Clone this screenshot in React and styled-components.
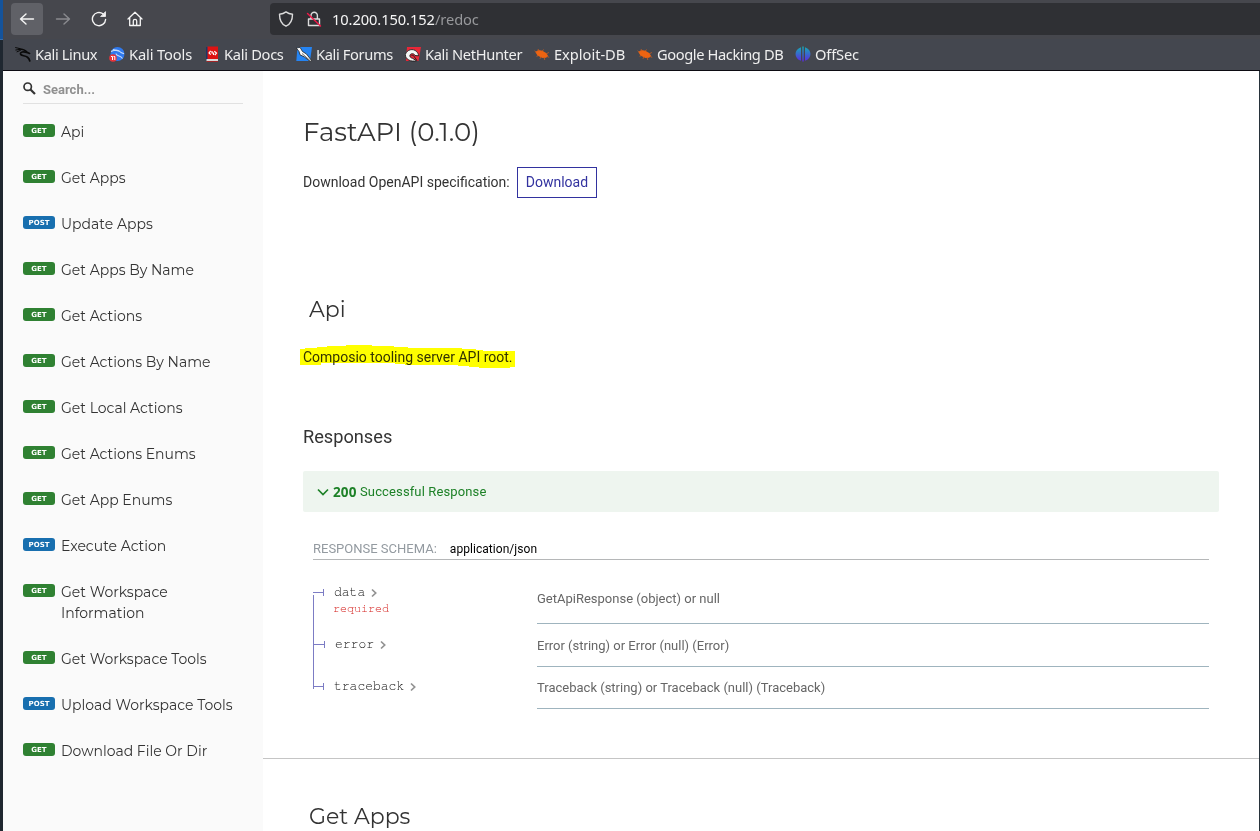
import React from 'react';
import styled, { createGlobalStyle } from 'styled-components';

const GlobalStyle = createGlobalStyle`
  * { box-sizing: border-box; }
  body { margin: 0; background: #fff; overflow: hidden; }
  svg { display: block; flex: none; }
`;

const ui = '"Noto Sans", "Open Sans", sans-serif';
const body = 'Roboto, "Liberation Sans", sans-serif';
const heading = 'Montserrat, Inter, sans-serif';
const mono = '"Nimbus Mono PS", FreeMono, "Courier Prime", "Cutive Mono", "Liberation Mono", monospace';

const Screen = styled.div`
  display: grid;
  grid-template-columns: 3px 1fr;
  width: 1260px;
  height: 831px;
  overflow: hidden;
`;

const DesktopEdge = styled.div`
  background: linear-gradient(#14539b 0 39px, #3a6ea8 39px 40px, #1f2730 40px 100%);
`;

const Window = styled.div`
  display: flex;
  flex-direction: column;
  min-width: 0;
  height: 831px;
`;

const Toolbar = styled.div`
  display: flex;
  height: 39px;
  padding: 3px 0 4px 8px;
  background: #46474d;
`;

const NavButton = styled.div`
  display: flex;
  align-items: center;
  justify-content: center;
  width: 32px;
  height: 32px;
  margin-right: 4px;
  border-radius: 4px;
  background: ${(p) => (p.$active ? '#606167' : 'transparent')};
  color: ${(p) => (p.$dim ? '#8a8b8f' : '#f5f5f5')};
`;

const UrlBar = styled.div`
  display: flex;
  align-items: center;
  gap: 12px;
  flex: 1;
  height: 32px;
  margin-left: 115px;
  padding-left: 8px;
  border-radius: 4px 0 0 4px;
  background: #2f3034;
  color: #dcdcdc;
`;

const Url = styled.div`
  margin-left: -2px;
  font: 14.67px/20px ${ui};
  letter-spacing: -0.08px;
  color: #f5f5f5;
  span { color: #97989b; }
`;

const Bookmarks = styled.div`
  display: flex;
  height: 32px;
  padding: 0 0 1px 12px;
  background: #44474f;
  border-bottom: 1px solid #0c0b12;
`;

const Bookmark = styled.div`
  display: flex;
  align-items: center;
  gap: 4px;
  width: ${(p) => p.$width}px;
  font: 14.67px/20px ${ui};
  letter-spacing: ${(p) => p.$track}px;
  white-space: nowrap;
  color: #efefef;
`;

const Page = styled.div`
  display: grid;
  grid-template-columns: 260px 1fr;
  flex: 1;
  min-height: 0;
  border-right: 1px solid #27323a;
  background: #fff;
`;

const Sidebar = styled.nav`
  background: #fafafa;
  padding: 0 20px;
`;

const Search = styled.div`
  display: flex;
  align-items: center;
  gap: 7px;
  height: 33px;
  padding-top: 4px;
  margin-bottom: 5px;
  border-bottom: 1px solid #e1e1e1;
  font: 700 13px/20px ${body};
  color: #909090;
  span { padding-top: 1px; }
`;

const SearchIcon = styled.svg`
  margin-top: -2px;
`;

const MenuItem = styled.div`
  display: flex;
  padding: 13px 0 12px;
`;

const Badge = styled.span`
  flex: none;
  width: 32px;
  height: 13px;
  margin: 2px 6px 0 0;
  border-radius: 3px;
  background: ${(p) => (p.$post ? '#186faf' : '#2f8132')};
  color: #fff;
  font: 700 7px/14px "DejaVu Sans", sans-serif;
  text-align: center;
`;

const MenuLabel = styled.span`
  font: 400 14px/21px ${heading};
  white-space: pre-line;
  color: #333;
`;

const Main = styled.main`
  min-width: 0;
  height: 760px;
  overflow: hidden;
`;

const Section = styled.section`
  padding: ${(p) => p.$top}px 40px 0;
`;

const Title = styled.h1`
  margin: 0;
  font: 400 26px/42px ${heading};
  color: #333;
`;

const DownloadRow = styled.div`
  display: flex;
  align-items: center;
  gap: 7px;
  height: 31px;
  margin-top: 14px;
  font: 14px/20px ${body};
  color: #333;
  span { padding-bottom: 1px; }
`;

const DownloadButton = styled.a`
  padding: 4px 8px 5px;
  border: 1px solid #32329f;
  color: #32329f;
`;

const OperationTitle = styled.h2`
  margin: 0 0 0 6px;
  font: 400 22px/30px ${heading};
  color: #333;
`;

const Description = styled.p`
  position: relative;
  margin: 22px 0 0;
  font: 14px/20px ${body};
  color: #333;
`;

const Marker = styled.svg`
  position: absolute;
  left: -3px;
  top: -2px;
  mix-blend-mode: multiply;
`;

const ResponsesTitle = styled.h3`
  margin: 58px 0 0;
  font: 400 18.2px/24px ${body};
  color: #333;
`;

const ResponseBar = styled.div`
  display: flex;
  align-items: center;
  height: 41px;
  margin-top: 22px;
  padding-left: 14px;
  border-radius: 2px;
  background: #eef5ef;
  color: #1d8127;
  font: 13px/20px ${body};
  letter-spacing: 0.13px;
  strong { width: 24px; margin: 0 3px 0 4px; font: 700 13.5px/20px ${ui}; }
`;

const SchemaHeader = styled.div`
  display: flex;
  align-items: center;
  gap: 13px;
  height: 22px;
  margin: 26px 10px 0;
  border-bottom: 1px solid #b5b7b8;
  font: 13px/20px ${body};
  color: #939aa0;
`;

const MimeType = styled.span`
  font-size: 12px;
  letter-spacing: 0.05px;
  color: #000;
`;

const Schema = styled.div`
  display: grid;
  grid-template-columns: 21px 203px 1fr;
  grid-template-rows: 64px 43px 42px;
  margin: 0 10px;
`;

const Tree = styled.svg`
  grid-row: 1 / 4;
`;

const FieldName = styled.div`
  grid-column: 2;
  padding: ${(p) => p.$top}px 0 0 ${(p) => p.$left || 0}px;
  font: 13px/16px ${mono};
  color: #111;
`;

const NameLine = styled.div`
  display: flex;
  align-items: center;
  gap: 6px;
`;

const Required = styled.div`
  margin-left: -1px;
  font-size: 11.7px;
  color: #d41f1c;
`;

const FieldType = styled.div`
  grid-column: 3;
  padding-top: ${(p) => p.$top}px;
  border-bottom: 1px solid #9fb4be;
  font: 13px/20px ${body};
  color: #666;
`;

const Divider = styled.hr`
  height: 1px;
  margin: 49px 0 0;
  border: 0;
  background: #c5c5c5;
`;

const Stroke = ({ size = 16, width = 1.4, children, ...rest }) => (
  <svg width={size} height={size} viewBox="0 0 16 16" fill="none" stroke="currentColor"
    strokeWidth={width} strokeLinecap="round" strokeLinejoin="round" {...rest}>{children}</svg>
);

const Chevron = () => (
  <svg width="7" height="10" viewBox="0 0 7 10" fill="none" stroke="#929292" strokeWidth="1.7">
    <path d="M1 1.500 4.700 5 1 8.500" />
  </svg>
);

const KaliIcon = () => (
  <svg width="16" height="16" viewBox="0 0 16 16" fill="none" stroke="#0a0a0a" strokeLinecap="round" strokeLinejoin="round">
    <path d="M.6 1.600 5 2.600M.8 4 5 3.400M2 5.800 5.500 4.300" strokeWidth="1" />
    <path d="M4 3c4 .2 6.500 1.300 8 3.200l2.600 1.300" strokeWidth="1.600" />
    <path d="M12 6.500C8 5 5.200 6.200 5.500 8c.4 2 4.500 1.300 7 3.200 1.500 1.100 2 2.300 2.300 3.800" strokeWidth="1.700" />
  </svg>
);
const ToolsIcon = () => (
  <svg width="16" height="16" viewBox="0 0 16 16">
    <circle cx="8.500" cy="8" r="7" fill="#2f79ee" />
    <path d="M2 5.500c4-2 8-1.500 10 1l3 1.200M4 3.500l7 2M7 7.500c0 3 4 1.500 6.500 5" fill="none" stroke="#c9ddfa" strokeWidth="1.100" />
    <circle cx="4" cy="12" r="3.800" fill="#e8343a" />
    <path d="M2 10.500h1.500v3.500M4.500 10.500h1.300v3.500" fill="none" stroke="#fff" strokeWidth="1" />
  </svg>
);
const DocsIcon = () => (
  <svg width="16" height="16" viewBox="0 0 16 16">
    <path d="M2 1h2v13H2z" fill="#1b3768" /><path d="M3.500.5H14V13H3.500z" fill="#dd1313" />
    <path d="M2.500 13H14v2.200H2.500z" fill="#dadada" /><path d="M2.500 15H14v.8H2.500z" fill="#b11515" />
    <path d="M6.700 4.800 5 7l1.700 1.700M10.300 5.300 12.500 7l-1.700 2.200M8 5v2l1.500 0v2" fill="none" stroke="#fff" strokeWidth="1.200" />
  </svg>
);
const ForumsIcon = () => (
  <svg width="16" height="16" viewBox="0 0 16 16">
    <path d="M1.500 1H16l-2 14H.3z" fill="#2584f3" />
    <path d="M.3 2 4 1.300l2.500 4.200 4 2.500 5 6.500-1.300 1L8.500 11 4 8.800 3 5.500z" fill="#f7f7f7" stroke="#222" strokeWidth=".8" />
    <path d="m6 7.500 8.500 7.500" stroke="#333" strokeWidth=".7" />
  </svg>
);
const HunterIcon = () => (
  <svg width="16" height="16" viewBox="0 0 16 16">
    <path d="M2 1h14l-2.500 14H1z" fill="#e92738" />
    <path d="M.3 8.500C2 3.500 8 2 11.500 5.500c1.300 1.300 2 2.700 2 4.300L10 9.500C9.500 7.500 6 7 5 9c-.6 1.600.8 3 2.500 3.300l4 2.400C6 16.200.3 13.500.3 8.500z" fill="#f5f5f5" stroke="#1c1c1c" strokeWidth=".9" />
    <path d="M6.500 9.500c1.500-.5 2.500.3 3 1.500l2.500 3.500" fill="none" stroke="#1c1c1c" strokeWidth=".9" />
  </svg>
);
const BugIcon = () => (
  <svg width="16" height="16" viewBox="0 0 16 16">
    <path d="M1.500 6.200c1.500-2 4.500-2.500 6.800-1.400L12.200 7l1.800 2.800-1.800 1.900-3.700.3-4.800-2.200z" fill="#ed6412" />
    <path d="m4 5.500.3-2.500M8 5.500l1.500-2M12 8l2.800-1.500M13 10.500l2.200.8M10 11l.8 3M7 10.500l-1 2.300M4.500 9.500l-2 .8M2.500 6.500.6 4.800" stroke="#d05c1b" strokeWidth=".8" />
  </svg>
);
const OffSecIcon = () => (
  <svg width="16" height="16" viewBox="0 0 16 16">
    <defs><linearGradient id="os" gradientUnits="userSpaceOnUse" x1="0" y1="1" x2="0" y2="15"><stop stopColor="#16a9b8" /><stop offset="1" stopColor="#5a2be0" /></linearGradient></defs>
    <path d="M6 1.200v13.600C-1.300 12.500-1.300 3.500 6 1.200zM7.300.5h1.400v15H7.300zM10 1.200c7.300 2.300 7.300 11.300 0 13.600z" fill="url(#os)" />
  </svg>
);

const bookmarks = [
  ['Kali Linux', KaliIcon, 94, -0.38], ['Kali Tools', ToolsIcon, 95, -0.12], ['Kali Docs', DocsIcon, 92, -0.3],
  ['Kali Forums', ForumsIcon, 109, -0.36], ['Kali NetHunter', HunterIcon, 129, -0.34], ['Exploit-DB', BugIcon, 103, -0.03],
  ['Google Hacking DB', BugIcon, 158, -0.4], ['OffSec', OffSecIcon, 70, -0.15],
];

const menu = [
  ['Api'], ['Get Apps'], ['Update Apps', true], ['Get Apps By Name'], ['Get Actions'],
  ['Get Actions By Name'], ['Get Local Actions'], ['Get Actions Enums'], ['Get App Enums'],
  ['Execute Action', true], ['Get Workspace\nInformation'], ['Get Workspace Tools'],
  ['Upload Workspace Tools', true], ['Download File Or Dir'],
];

export default function App() {
  return (
    <Screen>
      <GlobalStyle />
      <DesktopEdge />
      <Window>
        <Toolbar>
          <NavButton $active><Stroke><path d="M14.500 8h-13M7 3 1.500 8 7 13" /></Stroke></NavButton>
          <NavButton $dim><Stroke><path d="M1.500 8h13M9 3 14.500 8 9 13" /></Stroke></NavButton>
          <NavButton>
            <Stroke><path d="M14.600 8.500A6.600 6.600 0 1 1 12 2.800" /><path d="M14.500 1v4.500H10z" fill="currentColor" strokeWidth=".8" /></Stroke>
          </NavButton>
          <NavButton>
            <Stroke width={1.3}><path d="M1 8 8 1.200 15 8M2.700 6.800v7.700h10.600V6.800M6.300 14.300V10c0-1 .6-1.600 1.700-1.600s1.700.6 1.700 1.600v4.300" /></Stroke>
          </NavButton>
          <UrlBar>
            <Stroke><path d="M8 .9c2 1.500 4 2.100 6.500 2.300 0 6-1.500 9.800-6.500 12-5-2.200-6.500-6-6.500-12C4 3 6 2.400 8 .9z" /></Stroke>
            <Stroke>
              <path d="M2.500 8h11v6.500h-11zM5 8V4.500a3.200 3.200 0 0 1 6.400 0V8" /><path d="m1.500 2.500 13 12.500" stroke="#f01848" />
            </Stroke>
            <Url>10.200.150.152<span>/redoc</span></Url>
          </UrlBar>
        </Toolbar>
        <Bookmarks>
          {bookmarks.map(([name, Icon, width, track]) => (
            <Bookmark key={name} $width={width} $track={track}><Icon />{name}</Bookmark>
          ))}
        </Bookmarks>
        <Page>
          <Sidebar>
            <Search>
              <SearchIcon width="13" height="13" viewBox="0 0 13 13" fill="none" stroke="#333">
                <circle cx="4.700" cy="4.700" r="3.700" strokeWidth="1.700" /><path d="m7.500 7.500 4.500 4.500" strokeWidth="2.200" />
              </SearchIcon>
              <span>Search...</span>
            </Search>
            {menu.map(([label, post]) => (
              <MenuItem key={label}>
                <Badge $post={post}>{post ? 'POST' : 'GET'}</Badge>
                <MenuLabel>{label}</MenuLabel>
              </MenuItem>
            ))}
          </Sidebar>
          <Main>
            <Section $top={40}>
              <Title>FastAPI (0.1.0)</Title>
              <DownloadRow>
                <span>Download OpenAPI specification:</span>
                <DownloadButton>Download</DownloadButton>
              </DownloadRow>
            </Section>
            <Section $top={97}>
              <OperationTitle>Api</OperationTitle>
              <Description>
                Composio tooling server API root.
                <Marker width="216" height="24" viewBox="0 0 216 24">
                  <path fill="#ff0" d="M0 4h5V3h12V2h10V1h19V0h26v1h22v1h14v1h54v1h14v1h7v1h32v16h-5v1h-31v-1h-10v-1h-11v-1h-53v-1h-10v-1H21v2H0z" />
                </Marker>
              </Description>
              <ResponsesTitle>Responses</ResponsesTitle>
              <ResponseBar>
                <svg width="12" height="8" viewBox="0 0 12 8" fill="none" stroke="currentColor" strokeWidth="1.700"><path d="m1 1.500 5 5 5-5" /></svg>
                <strong>200</strong>Successful Response
              </ResponseBar>
              <SchemaHeader>RESPONSE SCHEMA: <MimeType>application/json</MimeType></SchemaHeader>
              <Schema>
                <Tree width="12" height="149" viewBox="0 0 12 149" fill="none" stroke="#7c7cc4">
                  <path d="M.5 35v94M0 32.500h10.500M10.500 29v7M0 84.500h11.500M11.500 81v7M0 126.500h10.500M10.500 123v7" />
                </Tree>
                <FieldName $top={25}>
                  <NameLine>data <Chevron /></NameLine>
                  <Required>required</Required>
                </FieldName>
                <FieldType $top={29}>GetApiResponse (object) or null</FieldType>
                <FieldName $top={13} $left={1}><NameLine>error <Chevron /></NameLine></FieldName>
                <FieldType $top={12}>Error (string) or Error (null) (Error)</FieldType>
                <FieldName $top={12}><NameLine>traceback <Chevron /></NameLine></FieldName>
                <FieldType $top={11}>Traceback (string) or Traceback (null) (Traceback)</FieldType>
              </Schema>
            </Section>
            <Divider />
            <Section $top={43}>
              <OperationTitle>Get Apps</OperationTitle>
            </Section>
          </Main>
        </Page>
      </Window>
    </Screen>
  );
}
